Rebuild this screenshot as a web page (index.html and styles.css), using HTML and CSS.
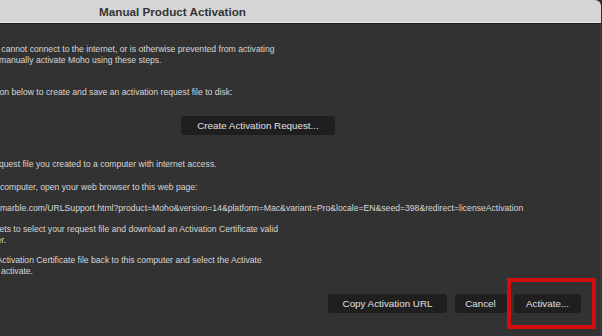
FILE: index.html
```html
<!DOCTYPE html>
<html lang="en">
<head>
  <meta charset="UTF-8" />
  <meta name="viewport" content="width=device-width, initial-scale=1.0"/>
  <title>Manual Product Activation</title>
  <link rel="stylesheet" href="styles.css">
</head>
<body>

  <div class="window">
    <div class="titlebar">Manual Product Activation</div>

    <div class="content">
      <p class="intro">If this computer cannot connect to the internet, or is otherwise prevented from activating<br>Moho, you can manually activate Moho using these steps.</p>

      <p class="step s1">1. Click the button below to create and save an activation request file to disk:</p>

      <div class="center">
        <button class="btn btn-create">Create Activation Request...</button>
      </div>

      <p class="step s2">2. Copy your request file you created to a computer with internet access.</p>
      <p class="step s3">3. On the other computer, open your web browser to this web page:</p>
      <p class="url">https://www.lostmarble.com/URLSupport.html?product=Moho&amp;version=14&amp;platform=Mac&amp;variant=Pro&amp;locale=EN&amp;seed=398&amp;redirect=licenseActivation</p>
      <p class="step s4">4. Use the widgets to select your request file and download an Activation Certificate valid<br>for this computer.</p>
      <p class="step s5">5. Return your Activation Certificate file back to this computer and select the Activate<br>button below to activate.</p>
    </div>

    <div class="footer">
      <button class="btn btn-copy">Copy Activation URL</button>
      <button class="btn btn-cancel">Cancel</button>
      <button class="btn btn-activate">Activate...</button>
    </div>
  </div>

  <div class="highlight"></div>

</body>
</html>
```

FILE: styles.css
```css
body {
  margin: 0;
  height: 336px;
  overflow: hidden;
  position: relative;
  background: #2d2d2d;
  font-family: "Liberation Sans", Arial, sans-serif;
}

.window {
  box-sizing: border-box;
  width: 857px;
  height: 336px;
  margin-left: -256px;
  background: #323232;
  border-radius: 6px 6px 0 0;
  overflow: hidden;
  box-shadow: inset -1px 0 #3f3f3f;
}

.titlebar {
  height: 23px;
  line-height: 23px;
  background: #d5d5d5;
  color: #363636;
  font-weight: bold;
  font-size: 11.7px;
  text-align: center;
  box-shadow: inset 0 -1px #ebebeb;
  border-bottom: 1px solid #1b1b1b;
}

.content {
  padding: 20.4px 25px 0 196px;
  color: #d6d6d6;
  font-size: 8.65px;
  line-height: 10.5px;
}

.content p {
  margin: 0;
  white-space: nowrap;
}

.s1 { margin-top: 22px !important; }
.s2 { margin-top: 24.5px !important; }
.s3 { margin-top: 12.5px !important; }
.url { margin-top: 10px !important; }
.s4 { margin-top: 11px !important; }
.s5 { margin-top: 10px !important; }

.center {
  display: flex;
  justify-content: center;
  margin-top: 18px;
}

.btn {
  height: 19px;
  padding: 0;
  border: none;
  border-radius: 3px;
  background: #1f1f1f;
  color: #e0e0e0;
  font-family: "Liberation Sans", Arial, sans-serif;
  font-size: 9.8px;
  line-height: 19px;
  text-align: center;
}

.btn-create { width: 154px; }
.btn-copy { width: 119px; }
.btn-cancel { width: 52px; }
.btn-activate { width: 67px; }

.footer {
  display: flex;
  justify-content: flex-end;
  gap: 7.5px;
  margin-top: 17.6px;
  padding-right: 20px;
}

.highlight {
  position: absolute;
  left: 507px;
  top: 278px;
  width: 89px;
  height: 51px;
  box-sizing: border-box;
  border: 4px solid #d20d0d;
}
```
